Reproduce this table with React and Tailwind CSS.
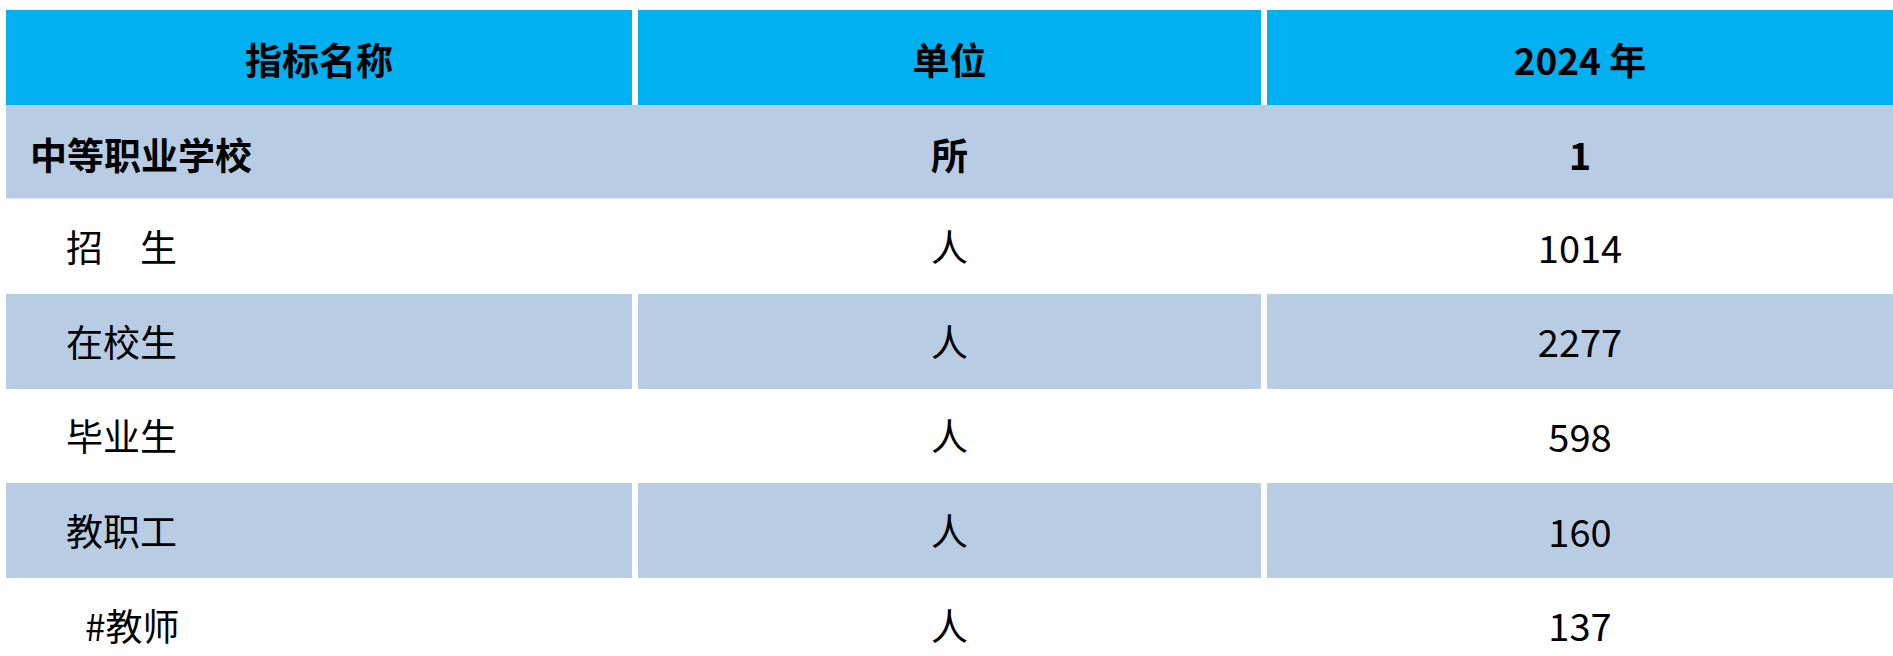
export default function App() {
  const rows = [
    { a: "中等职业学校", b: "所", c: "1", shade: true, bold: true, pad: "pl-[24px]", merged: true },
    { a: "招　生", b: "人", c: "1014", shade: false, pad: "pl-[60px]" },
    { a: "在校生", b: "人", c: "2277", shade: true, pad: "pl-[60px]" },
    { a: "毕业生", b: "人", c: "598", shade: false, pad: "pl-[60px]" },
    { a: "教职工", b: "人", c: "160", shade: true, pad: "pl-[60px]" },
    { a: "#教师", b: "人", c: "137", shade: false, pad: "pl-[79px]" },
  ];
  const font = { fontFamily: '"Noto Sans CJK SC", "Microsoft YaHei", sans-serif' };
  return (
    <div
      className="w-[1893px] h-[656px] overflow-hidden bg-white pt-[10px] pl-[6px] text-black text-[37px] leading-none"
      style={font}
    >
      <div className="grid grid-cols-[626px_623px_626px] gap-x-[6px] h-[94.67px] font-bold">
        <div className="bg-[#00b0f0] flex items-center justify-center pt-[4px]">指标名称</div>
        <div className="bg-[#00b0f0] flex items-center justify-center pt-[4px]">单位</div>
        <div className="bg-[#00b0f0] flex items-center justify-center pt-[4px]">2024 年</div>
      </div>
      {rows.map((r, i) => {
        const bg = r.shade ? "bg-[#b8cce4]" : "bg-white";
        return (
          <div
            key={i}
            className={
              "grid grid-cols-[626px_623px_626px] gap-x-[6px] h-[94.67px] " +
              (r.bold ? "font-bold pt-[6px] " : "font-normal ") +
              (r.merged ? "bg-[#b8cce4] border-b border-[#dde7f2]" : "")
            }
          >
            <div className={bg + " flex items-center " + r.pad}>{r.a}</div>
            <div className={bg + " flex items-center justify-center"}>{r.b}</div>
            <div className={bg + " flex items-center justify-center text-[38px]"}>{r.c}</div>
          </div>
        );
      })}
    </div>
  );
}
